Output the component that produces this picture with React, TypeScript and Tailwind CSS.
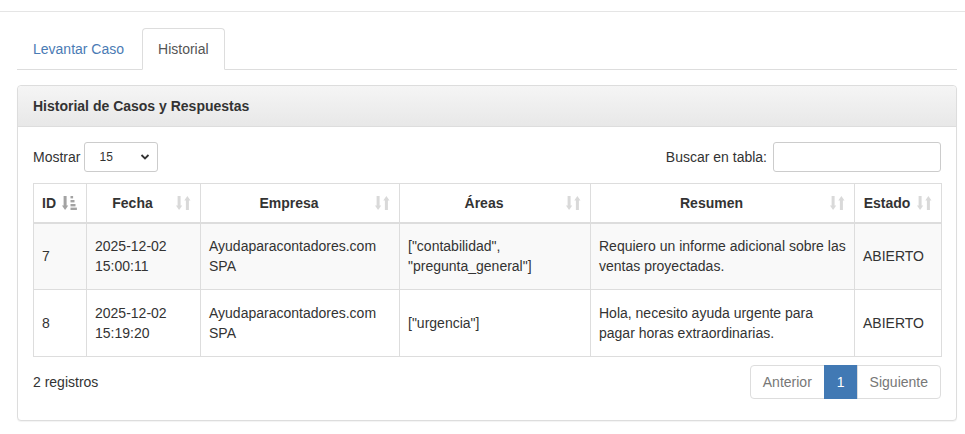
import React from 'react';

type Caso = { id: number; fecha: string; hora: string; empresa: string; areas: string[]; resumen: string; estado: string };

const casos: Caso[] = [
  {
    id: 7,
    fecha: '2025-12-02',
    hora: '15:00:11',
    empresa: 'Ayudaparacontadores.com SPA',
    areas: ['["contabilidad",', '"pregunta_general"]'],
    resumen: 'Requiero un informe adicional sobre las ventas proyectadas.',
    estado: 'ABIERTO',
  },
  {
    id: 8,
    fecha: '2025-12-02',
    hora: '15:19:20',
    empresa: 'Ayudaparacontadores.com SPA',
    areas: ['["urgencia"]'],
    resumen: 'Hola, necesito ayuda urgente para pagar horas extraordinarias.',
    estado: 'ABIERTO',
  },
];

function SortIcon({ active }: { active?: boolean }) {
  if (active) {
    return (
      <svg width="15" height="16" viewBox="0 0 15 16" className="fill-[#a3a3a3]">
        <rect x="1.6" y="1" width="3" height="10" />
        <polygon points="0,10.5 6.2,10.5 3.1,15" />
        <rect x="8.5" y="1" width="2.6" height="2.4" />
        <rect x="8.5" y="5" width="4" height="2.4" />
        <rect x="8.5" y="9" width="5" height="2.4" />
        <rect x="8.5" y="12.6" width="6.4" height="2.4" />
      </svg>
    );
  }
  return (
    <svg width="15" height="16" viewBox="0 0 15 16" className="fill-[#d9d9d9]">
      <rect x="1.6" y="1" width="3" height="10" />
      <polygon points="0,10.5 6.2,10.5 3.1,15" />
      <polygon points="8.3,5.5 14.5,5.5 11.4,1" />
      <rect x="9.9" y="5" width="3" height="10" />
    </svg>
  );
}

const headers = [
  { label: 'ID', w: 'w-[53px]', active: true },
  { label: 'Fecha', w: 'w-[114px]' },
  { label: 'Empresa', w: 'w-[199px]' },
  { label: 'Áreas', w: 'w-[191px]' },
  { label: 'Resumen', w: 'w-[264px]' },
  { label: 'Estado', w: 'w-[87px]' },
];

export default function App() {
  return (
    <div className="min-h-[434px] bg-white text-[14px] leading-[20px] text-[#333] font-['Liberation_Sans',Arial,sans-serif]">
      <div className="h-[12px] border-b border-[#e5e5e5]" />
      <div className="pl-[17px] pr-[8px] pt-[16px]">
        {/* tabs */}
        <ul className="flex border-b border-[#ddd]">
          <li className="-mb-px mr-[2px]">
            <a className="block px-[15px] py-[10px] border border-transparent rounded-t text-[#4a7bb4] cursor-pointer">
              Levantar Caso
            </a>
          </li>
          <li className="-mb-px">
            <a className="block px-[15px] py-[10px] border border-[#ddd] border-b-white bg-white rounded-t text-[#555]">
              Historial
            </a>
          </li>
        </ul>

        {/* panel */}
        <div className="mt-[15px] border border-[#ddd] rounded bg-white shadow-[0_1px_1px_rgba(0,0,0,0.05)]">
          <div className="px-[15px] py-[10px] border-b border-[#ddd] rounded-t bg-gradient-to-b from-[#f5f5f5] to-[#e8e8e8]">
            <h3 className="font-bold text-[14px]">Historial de Casos y Respuestas</h3>
          </div>
          <div className="px-[15px] pt-[15px] pb-[21px]">
            <div className="flex items-center justify-between">
              <label className="flex items-center gap-[4px]">
                Mostrar
                <span className="relative">
                  <select
                    defaultValue="15"
                    className="appearance-none w-[74px] h-[30px] pl-[14px] border border-[#ccc] rounded-[3px] bg-white text-[12px] text-[#333] outline-none"
                  >
                    <option>10</option>
                    <option>15</option>
                    <option>25</option>
                    <option>50</option>
                  </select>
                  <svg width="10" height="10" viewBox="0 0 10 10" className="absolute right-[8px] top-[10px] pointer-events-none">
                    <path d="M1.5 3 L5 6.5 L8.5 3" fill="none" stroke="#333" strokeWidth="1.8" />
                  </svg>
                </span>
              </label>
              <label className="flex items-center gap-[6px]">
                Buscar en tabla:
                <input type="search" className="w-[168px] h-[30px] border border-[#ccc] rounded-[3px] px-2 outline-none" />
              </label>
            </div>

            <table className="mt-[11px] w-[908px] table-fixed border-collapse">
              <colgroup>
                {headers.map(h => (
                  <col key={h.label} className={h.w} />
                ))}
              </colgroup>
              <thead>
                <tr>
                  {headers.map(h => (
                    <th
                      key={h.label}
                      className="relative border border-[#ddd] border-b-2 border-b-[#ddd] pl-2 pr-[30px] py-[8px] h-[39px] font-bold text-center align-middle"
                    >
                      {h.label}
                      <span className="absolute right-[9px] top-[11px]">
                        <SortIcon active={h.active} />
                      </span>
                    </th>
                  ))}
                </tr>
              </thead>
              <tbody>
                {casos.map((c, i) => (
                  <tr key={c.id} className={i % 2 === 0 ? 'bg-[#f9f9f9]' : 'bg-white'}>
                    <td className="border border-[#ddd] px-2 h-[67px] align-middle">{c.id}</td>
                    <td className="border border-[#ddd] px-2 align-middle">
                      {c.fecha}
                      <br />
                      {c.hora}
                    </td>
                    <td className="border border-[#ddd] px-2 align-middle">
                      Ayudaparacontadores.com
                      <br />
                      SPA
                    </td>
                    <td className="border border-[#ddd] px-2 align-middle">
                      {c.areas.map((a, j) => (
                        <div key={j}>{a}</div>
                      ))}
                    </td>
                    <td className="border border-[#ddd] px-2 align-middle">{c.resumen}</td>
                    <td className="border border-[#ddd] px-2 align-middle">{c.estado}</td>
                  </tr>
                ))}
              </tbody>
            </table>

            <div className="mt-[8px] flex items-center justify-between">
              <div>2 registros</div>
              <ul className="flex">
                <li>
                  <span className="block px-[12px] py-[6px] border border-[#ddd] rounded-l text-[#777] bg-white">Anterior</span>
                </li>
                <li>
                  <span className="block px-[12px] py-[6px] border border-[#4179b4] bg-[#4179b4] text-white -ml-px">1</span>
                </li>
                <li>
                  <span className="block px-[12px] py-[6px] border border-[#ddd] rounded-r text-[#777] bg-white -ml-px">Siguiente</span>
                </li>
              </ul>
            </div>
          </div>
        </div>
      </div>
    </div>
  );
}
